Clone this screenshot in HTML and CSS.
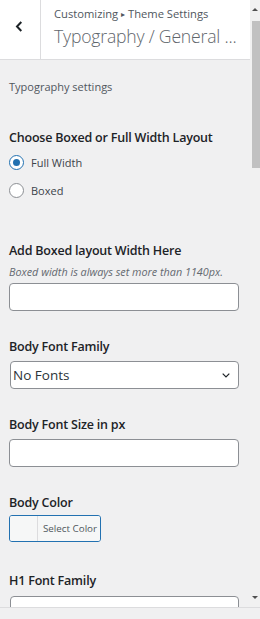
FILE: index.html
```html
<!DOCTYPE html>
<html lang="en">
<head>
  <meta charset="UTF-8" />
  <meta name="viewport" content="width=device-width, initial-scale=1.0" />
  <title>Customizing Typography</title>
  <link rel="stylesheet" href="styles.css">
</head>
<body>
  <div class="frame">
    <div class="panel">
      <div class="header">
        <button class="back" aria-label="Back">
          <svg width="8" height="11" viewBox="0 0 8 11"><path d="M6.3 1 L2 5.5 L6.3 10" fill="none" stroke="#1d2327" stroke-width="2"/></svg>
        </button>
        <div class="titles">
          <div class="crumbs">Customizing <span class="sep">&#9656;</span> Theme Settings</div>
          <div class="title">Typography / General ...</div>
        </div>
      </div>

      <div class="content">
        <p class="section-desc">Typography settings</p>

        <div class="control radios">
          <div class="label">Choose Boxed or Full Width Layout</div>
          <label class="radio"><span class="dot checked"></span>Full Width</label>
          <label class="radio"><span class="dot"></span>Boxed</label>
        </div>

        <div class="control">
          <div class="label">Add Boxed layout Width Here</div>
          <div class="desc">Boxed width is always set more than 1140px.</div>
          <div class="input"></div>
        </div>

        <div class="control">
          <div class="label">Body Font Family</div>
          <div class="select">
            <span>No Fonts</span>
            <svg width="8" height="5" viewBox="0 0 8 5"><path d="M0.7 0.7 L4 4 L7.3 0.7" fill="none" stroke="#1d2327" stroke-width="1.2"/></svg>
          </div>
        </div>

        <div class="control">
          <div class="label">Body Font Size in px</div>
          <div class="input"></div>
        </div>

        <div class="control color">
          <div class="label">Body Color</div>
          <div class="color-btn">
            <span class="swatch"></span>
            <span class="color-text">Select Color</span>
          </div>
        </div>

        <div class="control h1">
          <div class="label">H1 Font Family</div>
          <div class="select"></div>
        </div>
      </div>
    </div>

    <div class="scrollbar">
      <span class="arrow up"></span>
      <div class="thumb"></div>
      <span class="arrow down"></span>
    </div>
  </div>
  <div class="footer"></div>
</body>
</html>
```

FILE: styles.css
```css
body {
  margin: 0;
  font-family: "Open Sans", "Noto Sans", sans-serif;
  color: #1d2327;
  background: #f0f0f1;
  width: 260px;
  height: 619px;
  overflow: hidden;
}
.frame {
  display: flex;
  height: 607px;
}
.panel {
  width: 250px;
  overflow: hidden;
}
.header {
  display: flex;
  height: 59px;
  background: #fff;
  border-bottom: 1px solid #dcdcde;
}
.back {
  flex: none;
  width: 41px;
  border: none;
  border-right: 1px solid #dcdcde;
  background: #fff;
  padding: 0 2px 7px 0;
  display: flex;
  align-items: center;
  justify-content: center;
}
.titles {
  padding: 6px 0 0 13px;
  white-space: nowrap;
}
.crumbs {
  font-size: 11.2px;
  line-height: 16px;
  color: #50575e;
}
.sep {
  font-size: 8px;
  position: relative;
  top: -1px;
}
.title {
  font-size: 17.6px;
  font-weight: 300;
  letter-spacing: -0.2px;
  line-height: 26px;
  color: #5f666c;
}
.content {
  padding: 19px 11px 0 9px;
}
.section-desc {
  margin: 0 0 34px;
  font-size: 11px;
  line-height: 16px;
  color: #50575e;
}
.control {
  margin-bottom: 27px;
}
.control.radios {
  margin-bottom: 38px;
}
.control.color {
  margin-bottom: 30px;
}
.label {
  font-size: 12.5px;
  font-weight: 600;
  letter-spacing: -0.2px;
  line-height: 18px;
  margin-bottom: 5px;
}
.radios .label {
  margin-bottom: 1px;
}
.color .label {
  margin-bottom: 3px;
}
.h1 .label {
  margin-bottom: 6px;
}
.radio {
  display: flex;
  align-items: center;
  height: 28px;
  font-size: 11px;
  color: #3c434a;
}
.dot {
  width: 13px;
  height: 13px;
  border: 1px solid #8c8f94;
  border-radius: 50%;
  background: #fff;
  margin-right: 7px;
  display: flex;
  align-items: center;
  justify-content: center;
}
.dot.checked {
  border-color: #2271b1;
}
.dot.checked::after {
  content: "";
  width: 7px;
  height: 7px;
  border-radius: 50%;
  background: #2271b1;
}
.desc {
  font-size: 10.8px;
  font-style: italic;
  line-height: 16px;
  color: #646970;
  margin: -1px 0 3px;
}
.input, .select {
  height: 26px;
  background: #fff;
  border: 1px solid #8c8f94;
  border-radius: 4px;
}
.select {
  display: flex;
  align-items: center;
  justify-content: space-between;
  padding: 0 8px 0 2px;
  margin-left: 1px;
  font-size: 13.5px;
  color: #2c3338;
}
.color-btn {
  display: flex;
  width: 90px;
  height: 25px;
  border: 1px solid #2271b1;
  border-radius: 3px;
  overflow: hidden;
}
.swatch {
  width: 27px;
  background: #f6f7f7;
  border-right: 1px solid #dcdcde;
}
.color-text {
  flex: 1;
  background: #f6f7f7;
  font-size: 9.8px;
  white-space: nowrap;
  color: #50575e;
  display: flex;
  align-items: center;
  padding-left: 5px;
}
.scrollbar {
  width: 10px;
  background: #f1f1f1;
  display: flex;
  flex-direction: column;
  align-items: center;
}
.arrow {
  width: 0;
  height: 0;
  border-left: 3px solid transparent;
  border-right: 3px solid transparent;
}
.arrow.up {
  margin-top: 8px;
  border-bottom: 3px solid #505050;
}
.arrow.down {
  margin-top: auto;
  margin-bottom: 8px;
  border-top: 3px solid #505050;
}
.thumb {
  width: 8px;
  margin-left: 2px;
  height: 147px;
  margin-top: 10px;
  background: #c1c1c1;
}
.footer {
  height: 11px;
  border-top: 1px solid #dcdcde;
  background: #f0f0f1;
}
```
